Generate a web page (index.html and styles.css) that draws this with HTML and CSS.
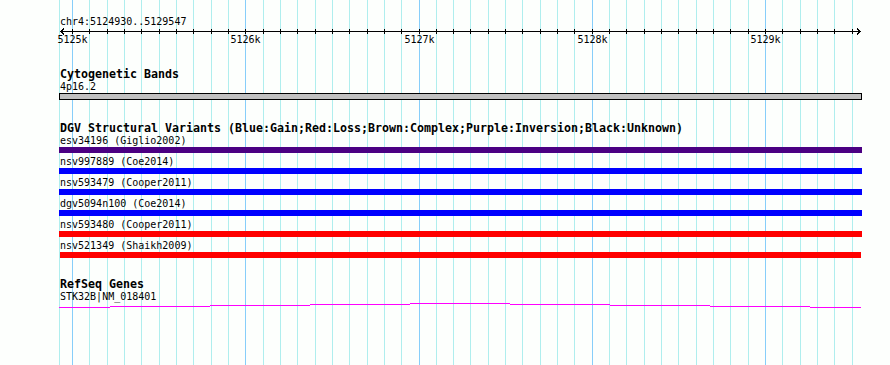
FILE: index.html
```html
<!DOCTYPE html>
<html lang="en">
<head>
  <meta charset="UTF-8" />
  <title>chr4:5124930..5129547</title>
  <link rel="stylesheet" href="styles.css">
</head>
<body>

  <div class="view">
    <!-- grid behind the tracks, one line per 100 bp -->
    <svg class="grid" width="890" height="365">
      <path class="minor" d="M59.5 0V365M89.5 0V365M107.5 0V365M124.5 0V365M141.5 0V365M159.5 0V365M176.5 0V365M193.5 0V365M211.5 0V365M228.5 0V365M263.5 0V365M280.5 0V365M297.5 0V365M315.5 0V365M332.5 0V365M349.5 0V365M367.5 0V365M384.5 0V365M401.5 0V365M436.5 0V365M453.5 0V365M470.5 0V365M488.5 0V365M505.5 0V365M522.5 0V365M540.5 0V365M557.5 0V365M574.5 0V365M609.5 0V365M626.5 0V365M644.5 0V365M661.5 0V365M678.5 0V365M696.5 0V365M713.5 0V365M730.5 0V365M748.5 0V365M782.5 0V365M800.5 0V365M817.5 0V365M834.5 0V365M852.5 0V365"/>
      <path class="major" d="M72.5 0V365M245.5 0V365M419.5 0V365M592.5 0V365M765.5 0V365"/>
    </svg>

    <div class="ruler">
      <div class="locus">chr4:5124930..5129547</div>
      <svg class="scale" width="890" height="18">
        <path d="M60 3.5H861M64 0.5L61 3.5L64 6.5M857 0.5L860 3.5L857 6.5"/>
        <path d="M72.5 1V6M89.5 1V6M107.5 1V6M124.5 1V6M141.5 1V6M159.5 1V6M176.5 1V6M193.5 1V6M211.5 1V6M228.5 1V6M245.5 1V6M263.5 1V6M280.5 1V6M297.5 1V6M315.5 1V6M332.5 1V6M349.5 1V6M367.5 1V6M384.5 1V6M401.5 1V6M419.5 1V6M436.5 1V6M453.5 1V6M470.5 1V6M488.5 1V6M505.5 1V6M522.5 1V6M540.5 1V6M557.5 1V6M574.5 1V6M592.5 1V6M609.5 1V6M626.5 1V6M644.5 1V6M661.5 1V6M678.5 1V6M696.5 1V6M713.5 1V6M730.5 1V6M748.5 1V6M765.5 1V6M782.5 1V6M800.5 1V6M817.5 1V6M834.5 1V6M852.5 1V6"/>
        <text x="72.5" y="15">5125k</text>
        <text x="245.5" y="15">5126k</text>
        <text x="419.5" y="15">5127k</text>
        <text x="592.5" y="15">5128k</text>
        <text x="765.5" y="15">5129k</text>
      </svg>
    </div>

    <div class="track">
      <div class="track-title">Cytogenetic Bands</div>
      <div class="feat-label">4p16.2</div>
      <div class="band"></div>
    </div>

    <div class="track">
      <div class="track-title">DGV Structural Variants (Blue:Gain;Red:Loss;Brown:Complex;Purple:Inversion;Black:Unknown)</div>
      <div class="feat-label">esv34196 (Giglio2002)</div>
      <div class="bar inversion"></div>
      <div class="feat-label">nsv997889 (Coe2014)</div>
      <div class="bar gain"></div>
      <div class="feat-label">nsv593479 (Cooper2011)</div>
      <div class="bar gain"></div>
      <div class="feat-label">dgv5094n100 (Coe2014)</div>
      <div class="bar gain"></div>
      <div class="feat-label">nsv593480 (Cooper2011)</div>
      <div class="bar loss"></div>
      <div class="feat-label">nsv521349 (Shaikh2009)</div>
      <div class="bar loss short"></div>
    </div>

    <div class="track genes">
      <div class="track-title">RefSeq Genes</div>
      <div class="feat-label">STK32B|NM_018401</div>
      <svg class="gene" width="890" height="10">
        <path d="M59 4.5H110M110 3.5H210M210 2.5H310M310 1.5H410M410 0.5H510M510 1.5H610M610 2.5H710M710 3.5H810M810 4.5H861"/>
      </svg>
    </div>
  </div>

</body>
</html>
```

FILE: styles.css
```css
body {
  margin: 0;
  background: #fdfffd;
  color: #000;
  font-family: "DejaVu Sans Mono", monospace;
  font-size: 10px;
}
.view {
  position: relative;
  z-index: 0;
  width: 890px;
  height: 365px;
  overflow: hidden;
}
.grid {
  position: absolute;
  left: 0;
  top: 0;
  z-index: -1;
}
.grid path {
  stroke-width: 1;
  shape-rendering: crispEdges;
}
.grid .minor {
  stroke: #afeeee;
}
.grid .major {
  stroke: #87cefa;
}
.locus {
  padding: 15px 0 0 60px;
  line-height: 13px;
}
.scale {
  display: block;
}
.scale path {
  stroke: #000;
  fill: none;
  shape-rendering: crispEdges;
}
.scale text {
  font-family: "DejaVu Sans Mono", monospace;
  font-size: 10px;
  text-anchor: middle;
}
.track {
  margin-top: 22px;
}
.track.genes {
  margin-top: 20px;
}
.track-title {
  padding-left: 60px;
  font-weight: bold;
  font-size: 11.63px;
  line-height: 12px;
  white-space: pre;
}
.feat-label {
  padding-left: 60px;
  line-height: 13px;
  white-space: pre;
}
.band {
  margin-left: 59px;
  width: 801px;
  height: 5px;
  border: 1px solid #000;
  background: #c0c0c0;
}
.bar {
  margin: 0 0 2px 59px;
  width: 803px;
  height: 6px;
}
.bar.short {
  margin-left: 60px;
  width: 801px;
}
.bar.gain {
  background: #0000ff;
}
.bar.loss {
  background: #ff0000;
}
.bar.inversion {
  background: #4b0082;
}
.gene {
  display: block;
}
.gene path {
  stroke: #ff00ff;
  fill: none;
  shape-rendering: crispEdges;
}
```
